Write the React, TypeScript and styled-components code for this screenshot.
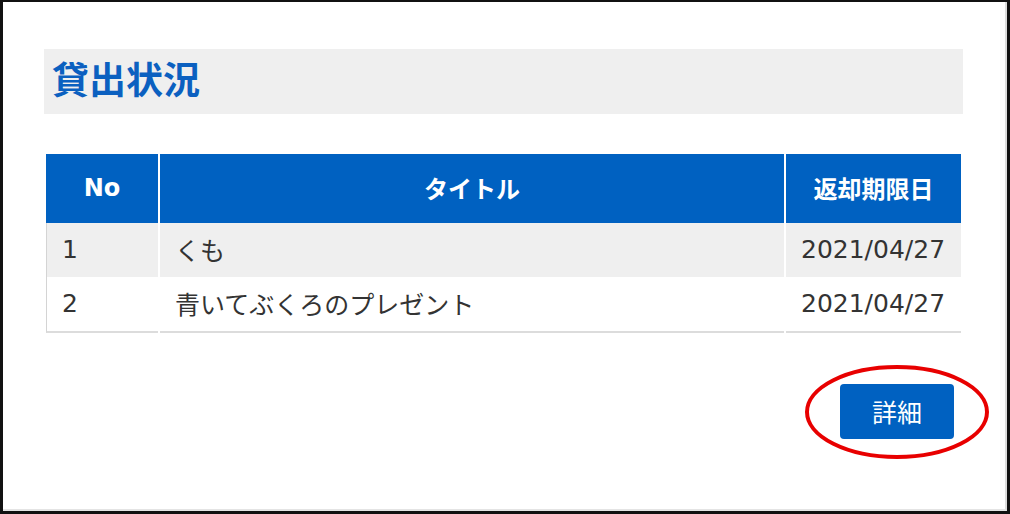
import styled, {createGlobalStyle} from "styled-components";

const GlobalStyle = createGlobalStyle`
  html, body {
    margin: 0;
    padding: 0;
    background: #fff;
  }
  body {
    font-family: "DejaVu Sans", "Noto Sans CJK JP", sans-serif;
    color: #333;
  }
`

const Frame = styled.div`
  width: 1010px;
  height: 514px;
  box-sizing: border-box;
  border-style: solid;
  border-color: #111;
  border-width: 2px 3px 3px 3px;
`

const Inner = styled.div`
  height: 100%;
  box-sizing: border-box;
  border-right: 2px solid #dcdcdc;
  border-bottom: 2px solid #e4e4e4;
  padding: 47px 42px 0 41px;
  display: flex;
  flex-direction: column;
`

const TitleBar = styled.div`
  height: 65px;
  background: #efefef;
  display: flex;
  align-items: center;
  padding: 0 0 7px 8px;
  box-sizing: border-box;
`

const Title = styled.h2`
  margin: 0;
  font-family: "Noto Sans CJK JP", sans-serif;
  font-size: 37px;
  font-weight: 700;
  color: #0b60c0;
  letter-spacing: 0;
`

const Table = styled.table`
  margin-top: 40px;
  width: 100%;
  border-collapse: separate;
  border-spacing: 2px 0;
  table-layout: fixed;
`

const HeadCell = styled.th<{ $w?: number }>`
  width: ${p => (p.$w ? `${p.$w}px` : "auto")};
  height: 67px;
  background: #0061c1;
  color: #fff;
  font-size: 24px;
  font-weight: 700;
  text-align: center;
  padding: 0 0 2px;
`

const Row = styled.tr<{ $shade?: boolean }>`
  background: ${p => (p.$shade ? "#efefef" : "#fff")};

  td:first-child {
    border-left: 1px solid #d4d4d4;
  }
`

const Cell = styled.td<{ $last?: boolean }>`
  height: 52px;
  padding: 0 0 2px 15px;
  font-size: 25px;
  color: #333;
  white-space: nowrap;
  border-bottom: ${p => (p.$last ? "2px solid #dcdcdc" : "none")};
  background: inherit;
`

const Actions = styled.div`
  margin-top: 51px;
  display: flex;
  justify-content: flex-end;
  padding-right: 9px;
`

const ButtonWrap = styled.div`
  position: relative;
`

const DetailButton = styled.button`
  width: 114px;
  height: 55px;
  border: none;
  border-radius: 4px;
  background: #0061c1;
  color: #fff;
  font-family: "Noto Sans CJK JP", sans-serif;
  font-size: 25px;
  cursor: pointer;
  padding: 0 0 2px;
`

const Mark = styled.svg`
  position: absolute;
  left: -37px;
  top: -20px;
  pointer-events: none;
`

const loans = [
  {no: 1, title: "くも", due: "2021/04/27"},
  {no: 2, title: "青いてぶくろのプレゼント", due: "2021/04/27"},
];

export default function App() {
  return (
    <>
      <GlobalStyle/>
      <Frame>
        <Inner>
          <TitleBar>
            <Title>貸出状況</Title>
          </TitleBar>

          <Table>
            <thead>
              <tr>
                <HeadCell $w={112}>No</HeadCell>
                <HeadCell>タイトル</HeadCell>
                <HeadCell $w={175}>返却期限日</HeadCell>
              </tr>
            </thead>
            <tbody>
              {loans.map((l, i) => (
                <Row key={l.no} $shade={i % 2 === 0}>
                  <Cell $last={i === loans.length - 1}>{l.no}</Cell>
                  <Cell $last={i === loans.length - 1}>{l.title}</Cell>
                  <Cell $last={i === loans.length - 1}>{l.due}</Cell>
                </Row>
              ))}
            </tbody>
          </Table>

          <Actions>
            <ButtonWrap>
              <DetailButton>詳細</DetailButton>
              {/* red annotation ring */}
              <Mark width="188" height="96" viewBox="0 0 188 96">
                <ellipse cx="94" cy="48" rx="90" ry="45" fill="none" stroke="#e80000" strokeWidth="4"/>
              </Mark>
            </ButtonWrap>
          </Actions>
        </Inner>
      </Frame>
    </>
  );
}
